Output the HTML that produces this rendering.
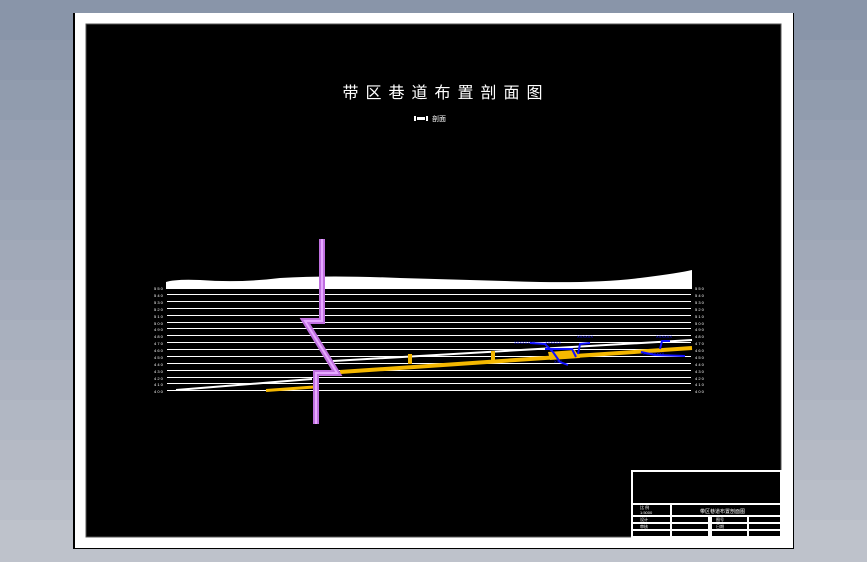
<!DOCTYPE html>
<html><head><meta charset="utf-8"><style>
html,body{margin:0;padding:0;width:867px;height:562px;overflow:hidden;background-color:#a4acba;}
svg{position:absolute;left:0;top:0;display:block}
</style></head><body>
<svg width="867" height="562" viewBox="0 0 867 562" xmlns="http://www.w3.org/2000/svg" font-family="Liberation Sans, Noto Sans CJK SC, sans-serif">
<rect x="0" y="0" width="867" height="41" fill="#8995a9"/>
<rect x="0" y="40" width="867" height="41" fill="#8d98ab"/>
<rect x="0" y="80" width="867" height="41" fill="#919cae"/>
<rect x="0" y="120" width="867" height="41" fill="#959fb1"/>
<rect x="0" y="160" width="867" height="41" fill="#99a2b3"/>
<rect x="0" y="200" width="867" height="41" fill="#9da6b6"/>
<rect x="0" y="240" width="867" height="41" fill="#a1a9b8"/>
<rect x="0" y="280" width="867" height="41" fill="#a5acbb"/>
<rect x="0" y="320" width="867" height="41" fill="#a9b0be"/>
<rect x="0" y="360" width="867" height="41" fill="#adb3c0"/>
<rect x="0" y="400" width="867" height="41" fill="#b1b7c3"/>
<rect x="0" y="440" width="867" height="41" fill="#b5bac5"/>
<rect x="0" y="480" width="867" height="41" fill="#b9bec8"/>
<rect x="0" y="520" width="867" height="42" fill="#bec2cb"/>
<rect x="73" y="13" width="721" height="536" fill="#000"/>
<rect x="75" y="13" width="718" height="535" fill="#fff"/>
<rect x="86" y="24" width="695" height="513" fill="#000" stroke="#555" stroke-width="1"/>
<text x="446" y="98" fill="#fff" font-size="16" text-anchor="middle" letter-spacing="7" font-family="Noto Sans CJK SC, sans-serif">带区巷道布置剖面图</text>
<rect x="414" y="116" width="2" height="5" fill="#fff"/><rect x="417" y="117" width="8" height="3" fill="#fff"/><rect x="426" y="116" width="2" height="5" fill="#fff"/>
<text x="432" y="121" fill="#fff" font-size="7" font-family="Noto Sans CJK SC, sans-serif">剖面</text>
<path d="M166 289 L166 282 Q175 279 200 280 Q240 283 280 278 Q330 275 400 278 Q470 280 540 282 Q600 283 640 278 Q680 273 692 270 L692 289 Z" fill="#fff"/>
<g stroke="#fff" stroke-width="1">
<line x1="167" y1="294.5" x2="691" y2="294.5"/><line x1="167" y1="301.5" x2="691" y2="301.5"/>
<line x1="167" y1="308.5" x2="691" y2="308.5"/><line x1="167" y1="315.5" x2="691" y2="315.5"/>
<line x1="167" y1="322.5" x2="691" y2="322.5"/><line x1="167" y1="328.5" x2="691" y2="328.5"/>
<line x1="167" y1="335.5" x2="691" y2="335.5"/><line x1="167" y1="342.5" x2="691" y2="342.5"/>
<line x1="167" y1="349.5" x2="691" y2="349.5"/><line x1="167" y1="356.5" x2="691" y2="356.5"/>
<line x1="167" y1="363.5" x2="691" y2="363.5"/><line x1="167" y1="370.5" x2="691" y2="370.5"/>
<line x1="167" y1="377.5" x2="691" y2="377.5"/><line x1="167" y1="383.5" x2="691" y2="383.5"/>
<line x1="167" y1="390.5" x2="691" y2="390.5"/>
</g>
<g fill="#fff" font-size="4">
<text x="154" y="290">5 5 0</text><text x="154" y="297">5 4 0</text><text x="154" y="304">5 3 0</text><text x="154" y="311">5 2 0</text><text x="154" y="318">5 1 0</text><text x="154" y="325">5 0 0</text><text x="154" y="331">4 9 0</text><text x="154" y="338">4 8 0</text><text x="154" y="345">4 7 0</text><text x="154" y="352">4 6 0</text><text x="154" y="359">4 5 0</text><text x="154" y="366">4 4 0</text><text x="154" y="373">4 3 0</text><text x="154" y="380">4 2 0</text><text x="154" y="386">4 1 0</text><text x="154" y="393">4 0 0</text>
<text x="695" y="290">5 5 0</text><text x="695" y="297">5 4 0</text><text x="695" y="304">5 3 0</text><text x="695" y="311">5 2 0</text><text x="695" y="318">5 1 0</text><text x="695" y="325">5 0 0</text><text x="695" y="331">4 9 0</text><text x="695" y="338">4 8 0</text><text x="695" y="345">4 7 0</text><text x="695" y="352">4 6 0</text><text x="695" y="359">4 5 0</text><text x="695" y="366">4 4 0</text><text x="695" y="373">4 3 0</text><text x="695" y="380">4 2 0</text><text x="695" y="386">4 1 0</text><text x="695" y="393">4 0 0</text>
</g>
<path d="M176 390 L312 379" stroke="#fff" stroke-width="2"/>
<path d="M333 361 L692 340" stroke="#fff" stroke-width="2"/>
<path d="M266 390.5 L314 387" stroke="#f5b800" stroke-width="3"/>
<path d="M340 372 L692 348" stroke="#f5b800" stroke-width="4"/>
<rect x="408" y="354" width="4" height="10" fill="#f5b800"/>
<rect x="491" y="351" width="4" height="10" fill="#f5b800"/>
<path d="M548 352 L575 350 L580 358 L550 360 Z" fill="#f5b800"/>
<g fill="none" stroke-linejoin="miter">
<path d="M322 239 L322 321 L305 321 L337 373 L316 373 L316 424" stroke="#c070e0" stroke-width="6"/>
<path d="M322 239 L322 321 L305 321 L337 373 L316 373 L316 424" stroke="#e6a8ff" stroke-width="2"/>
</g>
<g stroke="#1010ff" stroke-width="2" fill="none">
<path d="M530 343 L545 344 L553 352 L560 362 L568 365"/>
<path d="M545 349 L572 349 L576 357"/>
<path d="M578 354 L580 344 L590 343"/>
<path d="M641 352 L655 355 L685 356"/>
<path d="M660 349 L662 341 L670 341"/>
</g>
<g fill="#1010ff" font-size="4">
<text x="514" y="344">XXXXXXXX</text><text x="545" y="344">XXXXXX</text><text x="577" y="338">XXXXXX</text><text x="656" y="338">XXXXXX</text><text x="643" y="355">XXXXXXXX</text><text x="554" y="363">XXX</text>
</g>
<g stroke="#fff" stroke-width="2" fill="none">
<rect x="632" y="471" width="149" height="66"/>
<line x1="632" y1="504" x2="781" y2="504"/>
<line x1="632" y1="516" x2="781" y2="516"/>
<line x1="632" y1="523" x2="781" y2="523"/>
<line x1="632" y1="530" x2="781" y2="530"/>
<line x1="671" y1="504" x2="671" y2="537"/>
<line x1="709" y1="516" x2="709" y2="537"/>
<line x1="711" y1="516" x2="711" y2="537"/>
<line x1="748" y1="516" x2="748" y2="537"/>
</g>
<g fill="#fff" font-size="4">
<text x="640" y="509">比 例</text><text x="640" y="514">1:5000</text>
<text x="700" y="513" font-size="5">带区巷道布置剖面图</text>
<text x="640" y="521">设计</text><text x="640" y="528">审核</text><text x="716" y="521">图号</text><text x="716" y="528">日期</text>
</g>
</svg>
</body></html>
